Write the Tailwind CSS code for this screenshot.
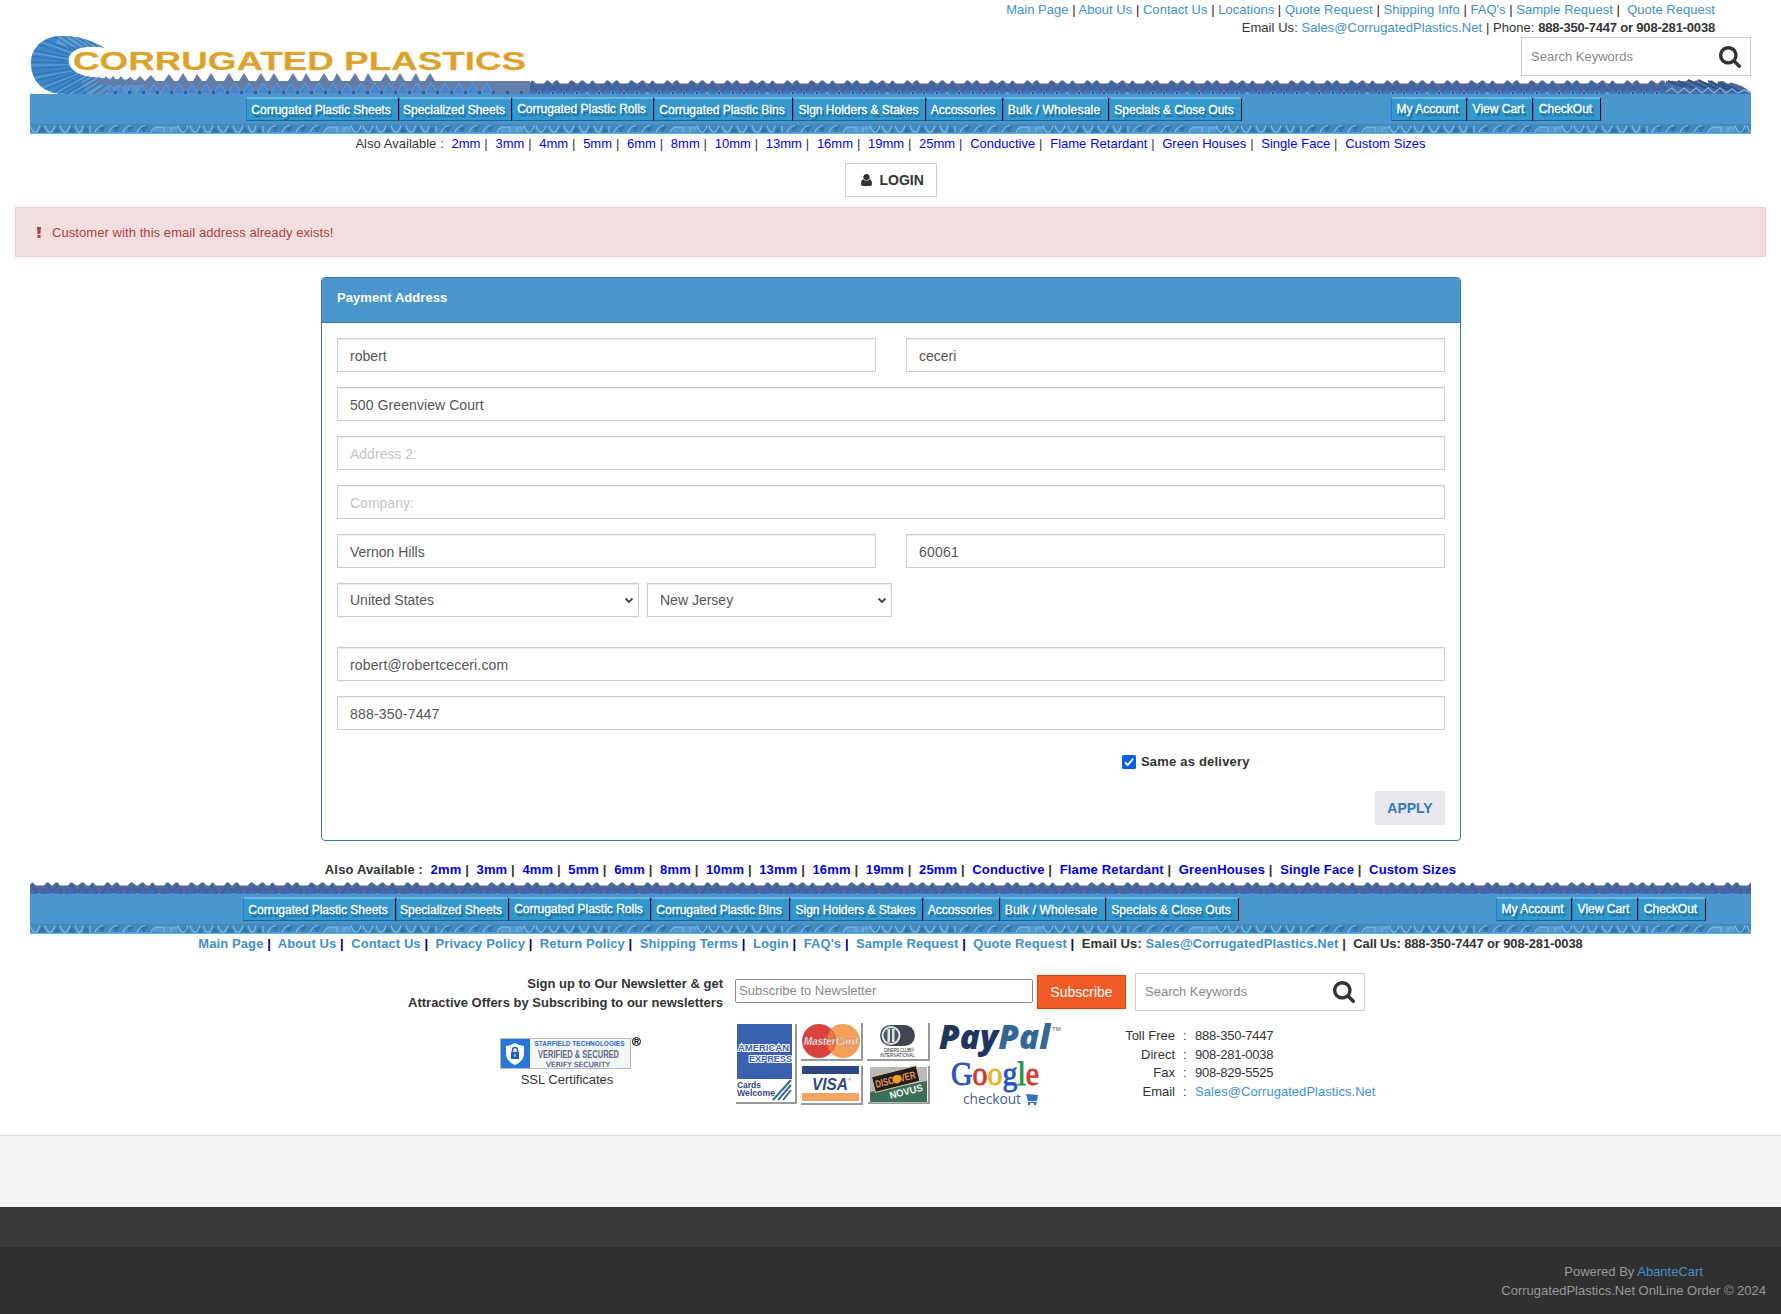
<!DOCTYPE html>
<html lang="en">
<head>
<meta charset="utf-8">
<title>Corrugated Plastics - Payment Address</title>
<script src="https://cdn.jsdelivr.net/npm/@tailwindcss/browser@4"></script>
</head>
<body class="bg-white text-[13px] leading-[18.5px] text-[#333] font-['Liberation_Sans',Arial,sans-serif] w-[1781px] overflow-x-hidden">

<!-- shared patterns and icons -->
<svg class="absolute w-0 h-0" aria-hidden="true">
  <defs>
    <linearGradient id="ridge" x1="0" y1="0" x2="0" y2="1"><stop offset="0" stop-color="#53648f"/><stop offset=".5" stop-color="#4567a6"/><stop offset="1" stop-color="#417cbd"/></linearGradient>
    <pattern id="strip" width="60" height="14" patternUnits="userSpaceOnUse">
      <rect y="3.500" width="60" height="11" fill="url(#ridge)"/>
      <path d="M-2 6L1 1.500Q2.500-.5 4 1.500L8 6zM12 6l4-5q1.500-1.500 3 0l3 3 3-3q1.500-1.500 3 0l4 5zM36 6l4-5q1.500-1.500 3 0l4 3 4-3q1.500-1.500 3 0l5 5z" fill="#586d98"/>
      <path d="M-4 14L2 3l6 11M10 14L18 3l5 8 4-8 6 11M34 14l8-11 5 8 5-8 7 11" fill="none" stroke="#3c62a1" stroke-width="2"/>
      <path d="M6 14q3-6 6 0zM20 14q3-6 6 0zM31 14q3-6 6 0zM44 14q3-6 6 0zM55 14q2-5 5 0z" fill="#5f9fdc"/>
      <path d="M8 14v-2h2v2zM22 14v-2h2v2zM33 14v-2h2v2zM46 14v-2h2v2z" fill="#1e4f92"/>
      <path d="M8 7h3v2H8zM32 7h3v2h-3z" fill="#63609c"/>
    </pattern>
    <pattern id="flute" width="173" height="10" patternUnits="userSpaceOnUse">
      <rect width="173" height="10" fill="#4489bd"/>
      <path d="M0 8.800h173v1.200H0z" fill="#62b0e2"/>
      <path d="M8 8.500l4-6 4 6zM23 8.500l4-6 4 6zM38 8.500l4-6 4 6zM53 8.500l3-6 4 6zM68 2.500l4 6 4-6zM82 2.500l4 6 4-6zM96 2.500l4 6 4-6zM110 2.500l4 6 4-6zM152 8.500l4-6 4 6zM165 8.500l4-6 4 6z" fill="#2f75ac"/>
      <path d="M0 1.500c3 9 7 9 10 0M15 1.500c3 9 7 9 10 0M30 1.500c3 9 7 9 10 0M45 1.500c3 9 6 9 8 0M60 8.500V2M65 8.500q2-6 8-7M79 8.500q2-6 8-7M93 8.500q2-6 8-7M107 8.500q2-6 8-7M121 8.500q2-6 8-5h5v5M141 8.500V4h6M148 1.500c3 9 7 9 10 0M160 1.500c3 9 7 9 10 0" fill="none" stroke="#7cc0ea" stroke-width="1.200"/>
      <path d="M124 2h24v6h-24z" fill="#68addc" opacity=".5"/>
    </pattern>
    <symbol id="search" viewBox="0 0 1664 1664"><path fill="#333" d="M1152 704q0-185-131.500-316.500T704 256 387.500 387.500 256 704t131.500 316.500T704 1152t316.500-131.500T1152 704zm512 832q0 52-38 90t-90 38q-54 0-90-38l-343-342q-179 124-399 124-143 0-273.500-55.500t-225-150-150-225T0 704t55.500-273.500 150-225 225-150T704 0t273.500 55.500 225 150 150 225T1408 704q0 220-124 399l343 343q37 37 37 90z"/></symbol>
    <clipPath id="curl"><path d="M75 13C64 6 48 0 28 1 10 3 1 15 1 28c0 18 12 31 34 31h465V46H110C90 44 70 44 55 41 43 38 37 30 39 22c3-9 20-13 36-9z"/></clipPath>
  </defs>
</svg>

<header class="h-[134px] px-[30px]">
  <div class="h-[37px] pr-[36px] pt-px text-right whitespace-nowrap">
    <div class="h-[18px] tracking-[0.03px] text-[#222]"><span class="text-[#428fca]">Main Page</span> | <span class="text-[#428fca]">About Us</span> | <span class="text-[#428fca]">Contact Us</span> | <span class="text-[#428fca]">Locations</span> | <span class="text-[#428fca]">Quote Request</span> | <span class="text-[#428fca]">Shipping Info</span> | <span class="text-[#428fca]">FAQ's</span> | <span class="text-[#428fca]">Sample Request</span> |&nbsp; <span class="text-[#428fca]">Quote Request</span></div>
    <div><span class="tracking-[0.05px]">Email Us: <span class="text-[#428fca]">Sales@CorrugatedPlastics.Net</span> | Phone: </span><b class="tracking-[-0.19px]">888-350-7447 or 908-281-0038</b></div>
  </div>
  <div class="relative h-[57px]">
    <svg class="absolute left-0 -top-[2px]" width="1721" height="59" viewBox="0 0 1721 59">
      <g transform="translate(500 45)"><path d="M0 0H1180C1200 1 1216 5 1221 14H0z" fill="url(#strip)"/><path d="M1136 1q50-1 85 13h-85z" fill="#4b6ca2"/><path d="M1138 1l18 7M1148 1l20 9M1158 0l22 10M1168 0l24 11M1178 1l24 10M1188 2l22 10" fill="none" stroke="#35527f" stroke-width="2"/><path d="M1136 12l6-4 6 5 6-5 6 5 6-5 6 5 6-5 6 5 6-5 6 5 6-4 6 4 6-3 8 3" fill="none" stroke="#6fafe4" stroke-width="1.500"/></g>
      <g clip-path="url(#curl)">
        <rect width="500" height="59" fill="#3f86c6"/>
        <path d="M28 0Q50 0 75 13L50 13 26 9z" fill="#5f9bd0"/>
        <path d="M48 36h62v23H56z" fill="#5f90c6"/>
        <path d="M68 12L54 3M62 12L46 1M56 12L38 0M50 13L30 0M46 15L22 0M43 17L14 4M40 20L7 9M39 23L3 15M38 26L1 21M38 28L0 27M38 31L0 34M40 34L2 40M43 36L5 46M46 38L9 51M50 39L14 55M54 40L20 59M59 41L28 59M65 42L36 59M71 43L44 59M78 43L53 59M85 44L63 59M92 44L73 59M99 45L83 59" stroke="#2f73b3" stroke-width="1.100"/>
        <path d="M44 18L10 7M40 24L2 18M39 30L1 30M42 36L4 43M48 39L12 53M57 41L24 59M68 43L40 59M81 44L58 59" stroke="#68aee2" stroke-width=".9"/>
        <path d="M110 46h390v13H110z" fill="#647fae"/>
      </g>
      <path d="M66 46l3-5 3 5 4-5 3 5 4-5 4 5 4-5 4 5 5-4 5 4 5-5 5 5 6-6 5 6 8 0 5-7 5 7h4l5-8 5 8h5l4-7 5 7h4l5-8 5 8h8l5-8 5 8h5l5-8 5 8h7l5-8 5 8h3l5-8 5 8h9l5-8 5 8h4l4-8 5 8h8l5-8 5 8h4l4-8 5 8h8l5-8 5 8h4l4-8 5 8h8l5-8 5 8h4l5-8 5 8h6l5-8 4 8h5l5-8 5 8h5v4H72z" fill="#647ca8"/>
      <path d="M76 59l5-9 5 9 5-9 5 9 5-9 5 9 6-10 6 10 6-10 6 10 6-10 6 10 7-10 7 10 6-10 7 10 7-10 7 10 7-10 7 10 8-11 7 11 7-11 7 11 7-11 7 11 7-11 7 11 7-11 7 11 7-11 7 11 7-11 7 11 7-11 7 11 7-11 7 11 7-11 7 11 7-11 7 11 7-11 7 11 7-11 7 11 7-11 7 11 7-11 7 11 7-11 7 11 7-11 7 11 7-11 7 11 7-11 6 11z" fill="#4d86c8" stroke="#649bd6" stroke-width="1"/>
      <path d="M84 57.500h412" stroke="#2464a8" stroke-width="3" stroke-dasharray="3 11"/>
      <text x="43" y="34.500" font-family="Liberation Sans" font-weight="700" font-size="25.500" textLength="453" lengthAdjust="spacingAndGlyphs" fill="#daa12c" stroke="#e7ba5e" stroke-width=".4">CORRUGATED PLASTICS</text>
    </svg>
    <div class="absolute right-0 top-0 flex h-[39px] w-[230px] items-center justify-between border border-[#ccc] bg-white pl-[9px] pr-[9px] text-[#888]"><span class="pt-px">Search Keywords</span><svg class="h-[22px] w-[22px]"><use href="#search"/></svg></div>
  </div>
  <nav class="h-[40px] bg-[#4a96cc]">
    <div class="flex h-[30px] pl-[216px] pt-[3px] text-center text-[12px] leading-[22px] text-white whitespace-nowrap [text-shadow:2px_3px_1px_#1c5f8d] [-webkit-text-stroke:0.3px_white]">
      <div class="h-[24px] w-[153px] border-t-2 border-b border-l border-r border-t-[#68b7e2] border-b-[#1c668f] border-l-[#2878e0] border-r-black bg-[#3398cc] pr-[3px]">Corrugated Plastic Sheets</div>
      <div class="h-[24px] w-[113px] border-t-2 border-b border-l border-r border-t-[#68b7e2] border-b-[#1c668f] border-l-[#2878e0] border-r-black bg-[#3398cc] pr-[3px]">Specialized Sheets</div>
      <div class="h-[24px] w-[142px] border-t-2 border-b border-l border-r border-t-[#68b7e2] border-b-[#1c668f] border-l-[#2878e0] border-r-black bg-[#3398cc] pr-[3px] leading-[20px]">Corrugated Plastic Rolls</div>
      <div class="h-[24px] w-[139px] border-t-2 border-b border-l border-r border-t-[#68b7e2] border-b-[#1c668f] border-l-[#2878e0] border-r-black bg-[#3398cc] pr-[3px]">Corrugated Plastic Bins</div>
      <div class="h-[24px] w-[133px] border-t-2 border-b border-l border-r border-t-[#68b7e2] border-b-[#1c668f] border-l-[#2878e0] border-r-black bg-[#3398cc] pr-[2px]">Sign Holders &amp; Stakes</div>
      <div class="h-[24px] w-[77px] border-t-2 border-b border-l border-r border-t-[#68b7e2] border-b-[#1c668f] border-l-[#2878e0] border-r-black bg-[#3398cc] pr-[3px]">Accossories</div>
      <div class="h-[24px] w-[106px] border-t-2 border-b border-l border-r border-t-[#68b7e2] border-b-[#1c668f] border-l-[#2878e0] border-r-black bg-[#3398cc] pr-[4px] tracking-[0.2px]">Bulk / Wholesale</div>
      <div class="h-[24px] w-[133px] border-t-2 border-b border-l border-r border-t-[#68b7e2] border-b-[#1c668f] border-l-[#2878e0] border-r-black bg-[#3398cc] pr-[3px]">Specials &amp; Close Outs</div>
      <div class="ml-[149px] h-[24px] w-[76px] border-t-2 border-b border-l border-r border-t-[#68b7e2] border-b-[#1c668f] border-l-[#2878e0] border-r-black bg-[#3398cc] pr-[3px] leading-[21px]">My Account</div>
      <div class="h-[24px] w-[66px] border-t-2 border-b border-l border-r border-t-[#68b7e2] border-b-[#1c668f] border-l-[#2878e0] border-r-black bg-[#3398cc] pr-[3px] leading-[21px]">View Cart</div>
      <div class="h-[24px] w-[68px] border-t-2 border-b border-l border-r border-t-[#68b7e2] border-b-[#1c668f] border-l-[#2878e0] border-r-black bg-[#3398cc] pr-[3px] leading-[21px]">CheckOut</div>
    </div>
    <svg class="block" width="1721" height="10"><rect width="1721" height="10" fill="url(#flute)"/></svg>
  </nav>
</header>

<div class="h-[29px] pt-px text-center text-[#333] whitespace-nowrap [word-spacing:0.25px]">Also Available :&nbsp; <span class="text-[#0000ee]">2mm</span> |&nbsp; <span class="text-[#0000ee]">3mm</span> |&nbsp; <span class="text-[#0000ee]">4mm</span> |&nbsp; <span class="text-[#0000ee]">5mm</span> |&nbsp; <span class="text-[#0000ee]">6mm</span> |&nbsp; <span class="text-[#0000ee]">8mm</span> |&nbsp; <span class="text-[#0000ee]">10mm</span> |&nbsp; <span class="text-[#0000ee]">13mm</span> |&nbsp; <span class="text-[#0000ee]">16mm</span> |&nbsp; <span class="text-[#0000ee]">19mm</span> |&nbsp; <span class="text-[#0000ee]">25mm</span> |&nbsp; <span class="text-[#0000ee]">Conductive</span> |&nbsp; <span class="text-[#0000ee]">Flame Retardant</span> |&nbsp; <span class="text-[#0000ee]">Green Houses</span> |&nbsp; <span class="text-[#0000ee]">Single Face</span> |&nbsp; <span class="text-[#0000ee]">Custom Sizes</span></div>

<div class="flex h-[44px] justify-center">
  <button class="flex h-[34px] w-[92px] items-center border border-[#ccc] bg-white pl-[15px] text-[14px] font-bold"><svg class="mr-[8px] h-[12px] w-[11px]" viewBox="0 0 11 12"><path d="M5.500 0a3 3 0 0 1 1.500 5.700L6 6.500H5l-1-.8A3 3 0 0 1 5.500 0zM2.400 5.200Q3.800 7 5.500 7t3.100-1.800Q11 6 11 10q0 2-2 2H2q-2 0-2-2 0-4 2.400-4.800z" fill="#333"/></svg>LOGIN</button>
</div>

<div class="mx-[15px] flex h-[50px] items-center border border-[#ebccd1] bg-[#f2dede] pl-[20px] tracking-[0.07px] text-[#a94442]"><svg class="mr-[10px] h-[11px] w-[6px]" viewBox="0 0 6 11"><path d="M1 0h4l-.6 7H1.600zM1.500 8h3v3h-3z" fill="#a94442"/></svg><span class="pt-[2px]">Customer with this email address already exists!</span></div>

<main class="mt-[20px] ml-[321px] h-[564px] w-[1140px] overflow-hidden rounded-[4px] border border-[#337ab7] text-[14px] text-[#555]">
  <div class="h-[45px] border-b border-[#337ab7] bg-[#4a96cc] pl-[15px] pt-[11px] text-[13px] font-bold tracking-[0.07px] text-white">Payment Address</div>
  <div class="flex flex-col gap-[15px] px-[15px] pt-[15px]">
    <div class="grid grid-cols-2 gap-[30px]">
      <div class="h-[34px] border border-[#ccc] pl-[12px] leading-[34px] shadow-[inset_0_1px_1px_rgba(0,0,0,0.075)]">robert</div>
      <div class="h-[34px] border border-[#ccc] pl-[12px] leading-[34px] shadow-[inset_0_1px_1px_rgba(0,0,0,0.075)]">ceceri</div>
    </div>
    <div class="h-[34px] border border-[#ccc] pl-[12px] leading-[34px] tracking-[0.08px] shadow-[inset_0_1px_1px_rgba(0,0,0,0.075)]">500 Greenview Court</div>
    <div class="h-[34px] border border-[#ccc] pl-[12px] leading-[34px] text-[#c4c4c4] shadow-[inset_0_1px_1px_rgba(0,0,0,0.075)]">Address 2:</div>
    <div class="h-[34px] border border-[#ccc] pl-[12px] leading-[34px] text-[#c4c4c4] shadow-[inset_0_1px_1px_rgba(0,0,0,0.075)]">Company:</div>
    <div class="grid grid-cols-2 gap-[30px]">
      <div class="h-[34px] border border-[#ccc] pl-[12px] leading-[34px] shadow-[inset_0_1px_1px_rgba(0,0,0,0.075)]">Vernon Hills</div>
      <div class="h-[34px] border border-[#ccc] pl-[12px] leading-[34px] tracking-[0.2px] shadow-[inset_0_1px_1px_rgba(0,0,0,0.075)]">60061</div>
    </div>
    <div class="mb-[15px] flex gap-[8px]">
      <div class="flex h-[34px] w-[302px] items-center justify-between border border-[#ccc] pl-[12px] pr-[4px] shadow-[inset_0_1px_1px_rgba(0,0,0,0.075)]">United States<svg width="10" height="7" viewBox="0 0 10 7"><path d="M1.500 1.500L5 5l3.500-3.500" fill="none" stroke="#444" stroke-width="1.800"/></svg></div>
      <div class="flex h-[34px] w-[245px] items-center justify-between border border-[#ccc] pl-[12px] pr-[4px] shadow-[inset_0_1px_1px_rgba(0,0,0,0.075)]">New Jersey<svg width="10" height="7" viewBox="0 0 10 7"><path d="M1.500 1.500L5 5l3.500-3.500" fill="none" stroke="#444" stroke-width="1.800"/></svg></div>
    </div>
    <div class="h-[34px] border border-[#ccc] pl-[12px] leading-[34px] tracking-[0.14px] shadow-[inset_0_1px_1px_rgba(0,0,0,0.075)]">robert@robertceceri.com</div>
    <div class="h-[34px] border border-[#ccc] pl-[12px] leading-[34px] tracking-[0.2px] shadow-[inset_0_1px_1px_rgba(0,0,0,0.075)]">888-350-7447</div>
  </div>
  <div class="mt-[23px] ml-[800px] flex h-[18px] items-center text-[13px] font-bold tracking-[0.2px] text-[#333]"><svg class="mr-[5px]" width="14" height="14" viewBox="0 0 14 14"><rect width="14" height="14" rx="1.500" fill="#0560df"/><path d="M3 7.200l2.700 2.900L11.200 3.600" fill="none" stroke="#fff" stroke-width="2"/></svg>Same as delivery</div>
  <div class="mt-[20px] ml-[1053px] h-[34px] w-[70px] bg-[#e7e7ed] text-center font-bold leading-[35px] text-[#337ab7]">APPLY</div>
</main>

<footer>
  <div class="mt-[20px] h-[21px] text-center font-bold tracking-[0.15px] text-[#333] whitespace-nowrap">Also Available :&nbsp; <span class="text-[#0000ee]">2mm</span> |&nbsp; <span class="text-[#0000ee]">3mm</span> |&nbsp; <span class="text-[#0000ee]">4mm</span> |&nbsp; <span class="text-[#0000ee]">5mm</span> |&nbsp; <span class="text-[#0000ee]">6mm</span> |&nbsp; <span class="text-[#0000ee]">8mm</span> |&nbsp; <span class="text-[#0000ee]">10mm</span> |&nbsp; <span class="text-[#0000ee]">13mm</span> |&nbsp; <span class="text-[#0000ee]">16mm</span> |&nbsp; <span class="text-[#0000ee]">19mm</span> |&nbsp; <span class="text-[#0000ee]">25mm</span> |&nbsp; <span class="text-[#0000ee]">Conductive</span> |&nbsp; <span class="text-[#0000ee]">Flame Retardant</span> |&nbsp; <span class="text-[#0000ee]">GreenHouses</span> |&nbsp; <span class="text-[#0000ee]">Single Face</span> |&nbsp; <span class="text-[#0000ee]">Custom Sizes</span></div>
  <svg class="mx-[30px] block" width="1721" height="12"><rect width="1721" height="14" fill="url(#strip)"/></svg>
  <nav class="mx-[30px] h-[40px] bg-[#4a96cc]">
    <div class="flex h-[30px] pl-[213px] pt-[3px] text-center text-[12px] leading-[22px] text-white whitespace-nowrap [text-shadow:2px_3px_1px_#1c5f8d] [-webkit-text-stroke:0.3px_white]">
      <div class="h-[24px] w-[153px] border-t-2 border-b border-l border-r border-t-[#68b7e2] border-b-[#1c668f] border-l-[#2878e0] border-r-black bg-[#3398cc] pr-[3px]">Corrugated Plastic Sheets</div>
      <div class="h-[24px] w-[113px] border-t-2 border-b border-l border-r border-t-[#68b7e2] border-b-[#1c668f] border-l-[#2878e0] border-r-black bg-[#3398cc] pr-[3px]">Specialized Sheets</div>
      <div class="h-[24px] w-[142px] border-t-2 border-b border-l border-r border-t-[#68b7e2] border-b-[#1c668f] border-l-[#2878e0] border-r-black bg-[#3398cc] pr-[3px] leading-[20px]">Corrugated Plastic Rolls</div>
      <div class="h-[24px] w-[139px] border-t-2 border-b border-l border-r border-t-[#68b7e2] border-b-[#1c668f] border-l-[#2878e0] border-r-black bg-[#3398cc] pr-[3px]">Corrugated Plastic Bins</div>
      <div class="h-[24px] w-[133px] border-t-2 border-b border-l border-r border-t-[#68b7e2] border-b-[#1c668f] border-l-[#2878e0] border-r-black bg-[#3398cc] pr-[2px]">Sign Holders &amp; Stakes</div>
      <div class="h-[24px] w-[77px] border-t-2 border-b border-l border-r border-t-[#68b7e2] border-b-[#1c668f] border-l-[#2878e0] border-r-black bg-[#3398cc] pr-[3px]">Accossories</div>
      <div class="h-[24px] w-[106px] border-t-2 border-b border-l border-r border-t-[#68b7e2] border-b-[#1c668f] border-l-[#2878e0] border-r-black bg-[#3398cc] pr-[4px] tracking-[0.2px]">Bulk / Wholesale</div>
      <div class="h-[24px] w-[133px] border-t-2 border-b border-l border-r border-t-[#68b7e2] border-b-[#1c668f] border-l-[#2878e0] border-r-black bg-[#3398cc] pr-[3px]">Specials &amp; Close Outs</div>
      <div class="ml-[257px] h-[24px] w-[76px] border-t-2 border-b border-l border-r border-t-[#68b7e2] border-b-[#1c668f] border-l-[#2878e0] border-r-black bg-[#3398cc] pr-[3px] leading-[21px]">My Account</div>
      <div class="h-[24px] w-[66px] border-t-2 border-b border-l border-r border-t-[#68b7e2] border-b-[#1c668f] border-l-[#2878e0] border-r-black bg-[#3398cc] pr-[3px] leading-[21px]">View Cart</div>
      <div class="h-[24px] w-[68px] border-t-2 border-b border-l border-r border-t-[#68b7e2] border-b-[#1c668f] border-l-[#2878e0] border-r-black bg-[#3398cc] pr-[3px] leading-[21px]">CheckOut</div>
    </div>
    <svg class="block" width="1721" height="10"><rect width="1721" height="10" fill="url(#flute)"/></svg>
  </nav>
  <div class="h-[39px] pt-px text-center font-bold tracking-[0.09px] text-[#000080] whitespace-nowrap"><span class="text-[#428fca]">Main Page</span> |&nbsp; <span class="text-[#428fca]">About Us</span> |&nbsp; <span class="text-[#428fca]">Contact Us</span> |&nbsp; <span class="text-[#428fca]">Privacy Policy</span> |&nbsp; <span class="text-[#428fca]">Return Policy</span> |&nbsp; <span class="text-[#428fca]">Shipping Terms</span> |&nbsp; <span class="text-[#428fca]">Login</span> |&nbsp; <span class="text-[#428fca]">FAQ's</span> |&nbsp; <span class="text-[#428fca]">Sample Request</span> |&nbsp; <span class="text-[#428fca]">Quote Request</span> |&nbsp; <span class="text-[#333]">Email Us: <span class="text-[#428fca]">Sales@CorrugatedPlastics.Net</span> |&nbsp; <span class="tracking-[-0.13px]">Call Us: 888-350-7447 or 908-281-0038</span></span></div>

  <div class="flex h-[49px] items-start">
    <div class="w-[723px] pt-px text-right font-bold leading-[19px]">Sign up to Our Newsletter &amp; get<br>Attractive Offers by Subscribing to our newsletters</div>
    <div class="ml-[12px] mt-[6px] h-[24px] w-[298px] rounded-[2px] border border-[#8a8aa0] pl-[3px] leading-[22px] text-[#888]">Subscribe to Newsletter</div>
    <div class="ml-[4px] mt-[2px] h-[34px] w-[89px] border border-[#d9430b] bg-[#f15b26] text-center text-[14px] leading-[33px] text-white">Subscribe</div>
    <div class="ml-[9px] flex h-[38px] w-[230px] items-center justify-between border border-[#ccc] pl-[9px] pr-[9px] text-[#888]"><span>Search Keywords</span><svg class="h-[22px] w-[22px]"><use href="#search"/></svg></div>
  </div>

  <div class="flex h-[113px] items-start">
    <div class="ml-[500px] w-[148px] pt-[14px]">
      <svg class="block" width="148" height="34" viewBox="0 0 148 34" font-family="Liberation Sans">
        <rect x=".5" y="2.500" width="130" height="30" fill="#f4f5f7" stroke="#b9b9b9"/><rect x="1" y="3" width="29" height="29" fill="#2876d8"/>
        <path d="M15 7q5 3 9 3v8q0 7-9 11-9-4-9-11v-8q4 0 9-3z" fill="#fff"/><path d="M11 16h8v7h-8z" fill="#1f5fb5"/><path d="M12.500 16v-2a2.500 2.500 0 0 1 5 0v2" fill="none" stroke="#1f5fb5" stroke-width="1.500"/><path d="M14.500 18h1v3h-1z" fill="#fff"/>
        <text x="34.500" y="10" font-size="7" font-weight="700" fill="#2a6fca" textLength="90" lengthAdjust="spacingAndGlyphs">STARFIELD TECHNOLOGIES</text>
        <text x="38" y="21.500" font-size="10" font-weight="700" fill="#5b6b86" textLength="81" lengthAdjust="spacingAndGlyphs">VERIFIED &amp; SECURED</text>
        <text x="46" y="30.500" font-size="7" fill="#4c5a80" stroke="#4c5a80" stroke-width=".2" font-family="DejaVu Sans" textLength="64" lengthAdjust="spacingAndGlyphs">VERIFY SECURITY</text>
        <circle cx="136.500" cy="5.500" r="4" fill="none" stroke="#000"/><text x="134" y="8.300" font-size="7" font-weight="700">R</text>
      </svg>
      <div class="w-[134px] text-center leading-[20px]">SSL Certificates</div>
    </div>
    <svg class="ml-[87px] block" width="335" height="88" viewBox="735 1022 335 88" font-family="Liberation Sans">
      <g fill="none" stroke="#999" stroke-width="2"><path d="M736 1103h60v-79M801 1060h61v-37M867 1060h62v-37M801 1104h61v-38M868 1103h61v-37"/></g>
      <rect x="737" y="1024" width="55" height="55" fill="#3a60b0"/>
      <text x="738" y="1051" font-size="9" font-weight="700" fill="#3a60b0" stroke="#fff" stroke-width="2" paint-order="stroke" textLength="51" lengthAdjust="spacingAndGlyphs">AMERICAN</text>
      <text x="749" y="1062" font-size="9" font-weight="700" fill="#3a60b0" stroke="#fff" stroke-width="2" paint-order="stroke" textLength="43" lengthAdjust="spacingAndGlyphs">EXPRESS</text>
      <text x="737" y="1088" font-size="8.500" font-weight="700" fill="#33477c" textLength="24" lengthAdjust="spacingAndGlyphs">Cards</text><text x="737" y="1096" font-size="8.500" font-weight="700" fill="#33477c" textLength="38" lengthAdjust="spacingAndGlyphs">Welcome</text>
      <path d="M773 1100l18-20M778 1100l13-15M783 1100l8-10" stroke="#3e6a90" stroke-width="2"/>
      <circle cx="843" cy="1041" r="17" fill="#f3a059"/><circle cx="819" cy="1041" r="17" fill="#d9433f"/><path d="M831 1029q9 12 0 24q-4-5-4-12t4-12z" fill="#e97843"/>
      <text x="804" y="1045" font-size="10.500" font-style="italic" font-weight="700" fill="#fff" stroke="#a55" stroke-width=".3" textLength="54" lengthAdjust="spacingAndGlyphs">MasterCard</text>
      <rect x="880" y="1025" width="35" height="21" rx="10.500" fill="#3f4653"/><circle cx="891" cy="1035.500" r="9.500" fill="#dce5e6"/><circle cx="891" cy="1035.500" r="7.500" fill="#4b5565"/><path d="M887.500 1029h2.500v13h-2.500zM892 1029h2.500v13H892z" fill="#dce5e6"/>
      <text x="884" y="1052" font-size="4.500" fill="#333" textLength="30">DINERS CLUB®</text><text x="880" y="1057" font-size="4.500" fill="#333" textLength="35">INTERNATIONAL</text>
      <path d="M802 1066h57v8h-57z" fill="#2c4781"/><path d="M802 1093h57v8h-57z" fill="#f3a464"/>
      <text x="812" y="1090" font-size="17" font-style="italic" font-weight="700" fill="#2c4781" textLength="36" lengthAdjust="spacingAndGlyphs">VISA</text><text x="848" y="1081" font-size="4" fill="#2c4781">®</text>
      <path d="M870 1067h57v36h-57z" fill="#b7bab6"/><path d="M870 1092l57-11v21h-57z" fill="#3a7057"/>
      <g transform="rotate(-14 896 1080)"><path d="M873 1071h46v16h-46z" fill="#211d1c"/><path d="M873 1071h46v16h-46z" fill="none" stroke="#ddc0a0"/><text x="875" y="1083" font-size="10.500" font-weight="700" fill="#e2945b" textLength="41" lengthAdjust="spacingAndGlyphs">DISCOVER</text><circle cx="897" cy="1079.500" r="4.300" fill="#ef9c22"/><text x="886" y="1097" font-size="10" font-weight="700" fill="#f2f5ee" textLength="34" lengthAdjust="spacingAndGlyphs">NOVUS</text></g>
      <text x="939" y="1049" font-family="Open Sans" font-size="33" font-weight="800" font-style="italic" fill="#20365f" textLength="111" lengthAdjust="spacingAndGlyphs">Pay<tspan fill="#336896">Pal</tspan></text><text x="1052" y="1031" font-size="6" fill="#555">TM</text>
      <text x="951" y="1085" font-family="Liberation Serif" font-size="33" stroke-width=".9" textLength="88" lengthAdjust="spacingAndGlyphs"><tspan fill="#2754c5" stroke="#2754c5">G</tspan><tspan fill="#d63528" stroke="#d63528">o</tspan><tspan fill="#e7b523" stroke="#e7b523">o</tspan><tspan fill="#2754c5" stroke="#2754c5">g</tspan><tspan fill="#289447" stroke="#289447">l</tspan><tspan fill="#d63528" stroke="#d63528">e</tspan></text>
      <text x="963" y="1104" font-family="Open Sans" font-size="14" fill="#3f5d9e" textLength="58" lengthAdjust="spacingAndGlyphs">checkout</text>
      <path d="M1026 1094l12 1-1 6h-9zM1028 1102h9v1h-9z" fill="#376fbd"/><circle cx="1029" cy="1104" r="1.300" fill="#376fbd"/><circle cx="1035" cy="1104" r="1.300" fill="#376fbd"/>
    </svg>
    <div class="grid w-[320px] grid-cols-[105px_20px_1fr] pt-[5px] leading-[18.700px]">
      <span class="text-right">Toll Free</span><span class="pl-[8px]">:</span><span class="tracking-[-0.22px]">888-350-7447</span>
      <span class="text-right">Direct</span><span class="pl-[8px]">:</span><span class="tracking-[-0.22px]">908-281-0038</span>
      <span class="text-right">Fax</span><span class="pl-[8px]">:</span><span class="tracking-[-0.22px]">908-829-5525</span>
      <span class="text-right">Email</span><span class="pl-[8px]">:</span><span class="tracking-[0.04px] text-[#428fca]">Sales@CorrugatedPlastics.Net</span>
    </div>
  </div>
  <div class="h-[72px] border-t border-[#d8d8d8] bg-[#f4f4f4]"></div>
  <div class="h-[40px] bg-[#3a3a3a]"></div>
  <div class="h-[67px] bg-[#303030] pr-[15px] pt-[15px] text-right leading-[19px] text-[#999]"><div class="pr-[63px]">Powered By <span class="text-[#428fca]">AbanteCart</span></div><div>CorrugatedPlastics.Net OnlLine Order © 2024</div></div>
</footer>
</body>
</html>
